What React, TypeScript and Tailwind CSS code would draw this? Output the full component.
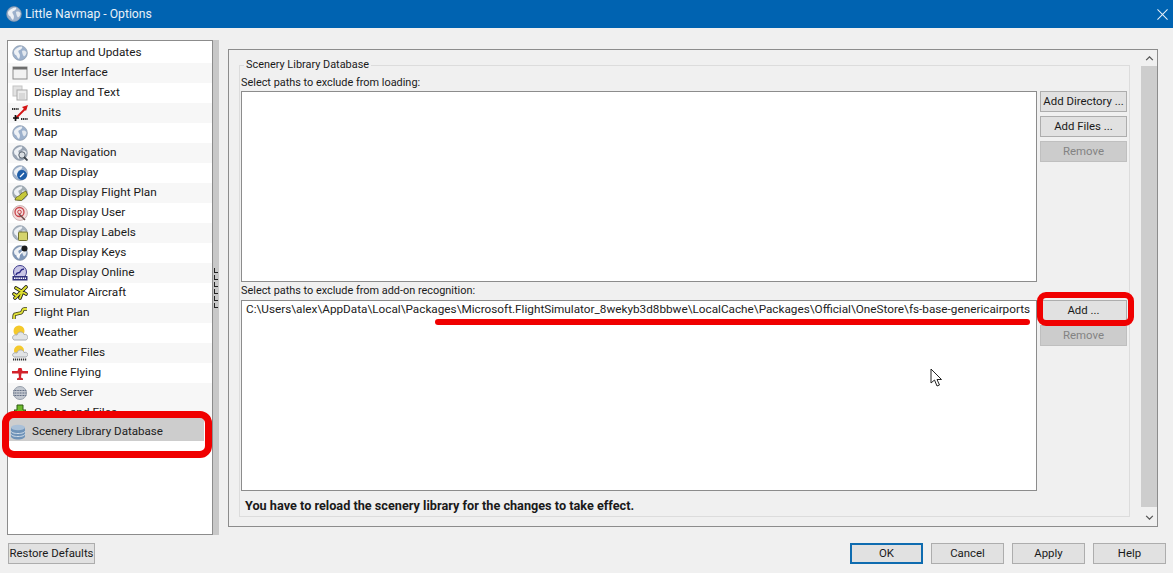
import { ReactNode } from "react";

const Globe = ({ c = "#9db1cc" }: { c?: string }) => (
  <>
    <circle cx="8" cy="8" r="7.400" fill={c} stroke="#8b98a8" strokeWidth="0.6" />
    <path d="M2 6c2-3 5-4.500 8-4.500 1 1.500-1 2.500-2 3.500-2 0-2 2-1 3 1.500 2 1 4 0 6-2-1-2-3-3-4-1.500 0-2-2-2-4z" fill="#eef1f5" />
    <path d="M10 6c2-1 3.500 0 4.500 1 0 2-1 3.500-2.500 4.500-1-1-2-3.500-2-5.500z" fill="#e3e8ee" />
  </>
);

const icons: Record<string, ReactNode> = {
  globe: <Globe />,
  window: (
    <>
      <rect x="1" y="2" width="14" height="12" fill="#f2f2f2" stroke="#8c8c8c" />
      <rect x="1" y="2" width="14" height="2.500" fill="#6d6d6d" />
    </>
  ),
  pages: (
    <>
      <rect x="1" y="1" width="9" height="10" fill="#e2e2e2" stroke="#c4c4c4" />
      <rect x="5" y="5" width="10" height="10" fill="#ececec" stroke="#a9a9a9" />
      <path d="M7 9h6M7 11h6M7 13h6" stroke="#c4c4c4" />
    </>
  ),
  units: (
    <>
      <path d="M3 14 14 3" stroke="#d41414" strokeWidth="1.800" />
      <path d="m16 0-6 2 4 4z" fill="#d41414" />
      <path d="M0 4h7" stroke="#333" strokeWidth="2" strokeDasharray="1.200 .6" />
      <path d="M1 13h6M3.500 10v6" stroke="#111" strokeWidth="1.700" />
      <path d="M9 14h7" stroke="#333" strokeWidth="2" strokeDasharray="1.200 .6" />
    </>
  ),
  nav: (
    <>
      <Globe c="#9aa5b4" />
      <circle cx="10" cy="10" r="3.200" fill="#d8dde2" stroke="#55606c" />
      <path d="m12 12 3.500 3.500" stroke="#3c444c" strokeWidth="1.800" />
    </>
  ),
  display: (
    <>
      <Globe />
      <circle cx="10" cy="10" r="5" fill="#1f5ea8" />
      <path d="m8 12 4-4" stroke="#fff" strokeWidth="1.200" />
    </>
  ),
  plan: (
    <>
      <Globe c="#a3adb3" />
      <path d="M3 15c1-4 3-3 5-5 1-2 4-3 6-4l1.500 4c-2 1-4 4-6 5.500z" fill="#c6c83a" stroke="#5a5a20" strokeWidth="0.8" />
    </>
  ),
  user: (
    <>
      <circle cx="8" cy="8" r="7.400" fill="#f4dcdc" stroke="#c9b0b0" />
      <circle cx="7.500" cy="7" r="4.500" fill="none" stroke="#c9444a" strokeWidth="1.300" />
      <circle cx="7.500" cy="7" r="1.800" fill="none" stroke="#c9444a" />
      <path d="m7 9 6 6" stroke="#6a4a4a" strokeWidth="1.400" />
    </>
  ),
  labels: (
    <>
      <Globe c="#a8b3bf" />
      <rect x="6.500" y="7" width="9" height="8.500" rx="1" fill="#d5d46c" stroke="#6f6f30" />
    </>
  ),
  keys: (
    <>
      <Globe c="#7f97b8" />
      <path d="m5 12 6-6" stroke="#fff" strokeWidth="1.300" />
      <circle cx="12.500" cy="3.500" r="3" fill="#1b1b1b" />
    </>
  ),
  online: (
    <>
      <circle cx="8" cy="7" r="6.500" fill="#c9c6e6" stroke="#3c3a8c" />
      <path d="M4 10c1-4 3-1 4-3s1-3 4-3" fill="none" stroke="#2c2a86" strokeWidth="1.500" />
      <rect x="0.500" y="11" width="15" height="4.500" fill="#30307c" />
      <path d="M2 13.200h12" stroke="#fff" strokeWidth="1.500" strokeDasharray="1.500 .7" />
    </>
  ),
  aircraft: (
    <>
      <path d="M14 2 3 13M4 3l10 6M8 13l2-5M2 9l3 2" stroke="#1c1c1c" strokeWidth="3.600" strokeLinecap="round" />
      <path d="M14 2 3 13M4 3l10 6M8 13l2-5M2 9l3 2" stroke="#dfe030" strokeWidth="2" strokeLinecap="round" />
    </>
  ),
  route: (
    <>
      <path d="M2 14c0-4 0-5 2-5l5-1c2-1 1-4 3-4h3" fill="none" stroke="#3a3a10" strokeWidth="3.400" />
      <path d="M2 14c0-4 0-5 2-5l5-1c2-1 1-4 3-4h3" fill="none" stroke="#e2e23a" strokeWidth="1.800" />
    </>
  ),
  weather: (
    <>
      <circle cx="7" cy="6" r="5.500" fill="#f4c92c" />
      <path d="M2 15c-3-2-1-6 3-5 1-4 6-4 7-.5 4-1 5 4 2 5.500z" fill="#e2e4e6" stroke="#a9adb2" />
    </>
  ),
  files: (
    <>
      <circle cx="7" cy="5.500" r="5" fill="#f4c92c" />
      <path d="M2 12c-3-2-1-5 3-4 1-4 6-4 7-.5 4-1 5 3 2 4.500z" fill="#e2e4e6" stroke="#a9adb2" />
      <path d="M1 14.500h14" stroke="#333" strokeWidth="1.800" strokeDasharray="1.200 .8" />
    </>
  ),
  flying: (
    <path d="M0 6h5.500l1-3h3l1 3H16v2.500H9.500l-.5 4 2 1v1.500H5v-1.500l2-1-.5-4H0z" fill="#d3222a" />
  ),
  server: (
    <>
      <circle cx="8" cy="8" r="6.500" fill="#c3c8d0" stroke="#98a0ac" />
      <path d="M1.500 5.500h13M1.500 8h13M1.500 10.500h13" stroke="#56627a" strokeWidth="1.200" strokeDasharray="1 .6" />
    </>
  ),
  cache: (
    <>
      <path d="M5 1h6v5h3l-6 6-6-6h3z" fill="#6dbb2c" stroke="#2f5a12" />
      <rect x="1" y="12" width="14" height="3" fill="#8a8a8a" />
    </>
  ),
  database: (
    <>
      <path d="M1 3.500v9C1 14 4 15.500 8 15.500s7-1.500 7-3v-9z" fill="#6f93b8" />
      <ellipse cx="8" cy="3.500" rx="7" ry="2.800" fill="#a9c0d8" />
      <path d="M1 7c0 1.500 3 2.500 7 2.500S15 8.500 15 7M1 10c0 1.500 3 2.500 7 2.500s7-1 7-2.500" fill="none" stroke="#d0dce8" />
    </>
  ),
};

const items: [string, string][] = [
  ["Startup and Updates", "globe"],
  ["User Interface", "window"],
  ["Display and Text", "pages"],
  ["Units", "units"],
  ["Map", "globe"],
  ["Map Navigation", "nav"],
  ["Map Display", "display"],
  ["Map Display Flight Plan", "plan"],
  ["Map Display User", "user"],
  ["Map Display Labels", "labels"],
  ["Map Display Keys", "keys"],
  ["Map Display Online", "online"],
  ["Simulator Aircraft", "aircraft"],
  ["Flight Plan", "route"],
  ["Weather", "weather"],
  ["Weather Files", "files"],
  ["Online Flying", "flying"],
  ["Web Server", "server"],
];

const Icon = ({ name }: { name: string }) => (
  <svg viewBox="0 0 16 16" className="h-4 w-4 shrink-0">
    {icons[name]}
  </svg>
);

const Btn = ({ children, disabled, className = "" }: { children: ReactNode; disabled?: boolean; className?: string }) => (
  <div
    className={`flex h-[21px] items-center justify-center whitespace-nowrap border pt-px text-[11.4px] ${
      disabled ? "border-[#bfbfbf] bg-[#cccccc] text-[#838383]" : "border-[#adadad] bg-[#e1e1e1] text-[#1a1a1a]"
    } ${className}`}
  >
    {children}
  </div>
);

const Section = ({ label, labelClass, children, buttons }: { label: string; labelClass: string; children?: ReactNode; buttons: ReactNode }) => (
  <>
    <div className={`flex items-center text-[10.9px] leading-none ${labelClass}`}>{label}</div>
    <div className="flex h-[191px] gap-[3px]">
      <div className="w-[796px] border border-[#8c8c8c] bg-white">{children}</div>
      <div className="flex w-[87px] flex-col gap-1">{buttons}</div>
    </div>
  </>
);

export default function App() {
  return (
    <div className="flex h-[573px] w-[1173px] flex-col overflow-hidden bg-[#f0f0f0] font-['Roboto',sans-serif] text-[11.8px] text-[#1a1a1a]">
      <header className="flex h-[28px] shrink-0 items-center bg-[#0063b1] pl-[6px] text-[12.2px] text-[#e8f0f8]">
        <Icon name="globe" />
        <span className="ml-[3px]">Little Navmap - Options</span>
        <svg viewBox="0 0 12 12" className="ml-auto mr-[5px] h-[11px] w-[11px]">
          <path d="m.5.500 11 11m0-11-11 11" stroke="#e8f0f8" strokeWidth="1.100" />
        </svg>
      </header>

      <div className="mt-[12px] flex h-[495px] shrink-0 pl-[7px]">
        <div className="relative w-[206px] overflow-hidden border border-[#8c8c8c] bg-white pt-[2px]">
          {items.map(([label, icon], i) => (
            <div key={label} className={`flex h-5 items-center gap-[6px] pl-1 ${i % 2 ? "bg-[#f7f7f7]" : ""}`}>
              <Icon name={icon} />
              <span>{label}</span>
            </div>
          ))}
          <div className="flex h-[15px] items-start gap-[6px] overflow-hidden bg-[#f7f7f7] pl-1 pt-[1px]">
            <Icon name="cache" />
            <span>Cache and Files</span>
          </div>
          <div className="flex h-[23px] w-[196px] items-center gap-[4px] bg-[#cdcdcd] pl-[2px] pt-[4px] text-[11.6px] text-[#222]">
            <Icon name="database" />
            <span className="ml-[2px]">Scenery Library Database</span>
          </div>
        </div>
        <div className="flex w-[6px] flex-col items-end justify-center gap-[2px] bg-[#c8c8c8] pr-[1px]">
          {Array.from({ length: 6 }).map((_, i) => (
            <div key={i} className="h-[5px] w-[4px] border-b border-l border-[#222]" />
          ))}
        </div>

        <div className="ml-[9px] mt-[9px] flex h-[478px] w-[930px] border border-[#8c8c8c]">
          <div className="w-[912px] pl-[10px] pt-[15px]">
            <div className="relative h-[452px] w-[891px] border border-[#dcdcdc] pl-px pt-[9px]">
              <span className="absolute -top-[6px] left-[4px] bg-[#f0f0f0] px-[2px] text-[10.9px] leading-none">Scenery Library Database</span>
              <Section
                label="Select paths to exclude from loading:"
                labelClass="h-[16px]"
                buttons={
                  <>
                    <Btn>Add Directory ...</Btn>
                    <Btn>Add Files ...</Btn>
                    <Btn disabled>Remove</Btn>
                  </>
                }
              />
              <Section
                label="Select paths to exclude from add-on recognition:"
                labelClass="h-[18px]"
                buttons={
                  <>
                    <Btn>Add ...</Btn>
                    <Btn disabled>Remove</Btn>
                  </>
                }
              >
                <div className="whitespace-nowrap pl-1 text-[11.75px] leading-[16px] text-[#222]">
                  C:\Users\alex\AppData\Local\Packages\Microsoft.FlightSimulator_8wekyb3d8bbwe\LocalCache\Packages\Official\OneStore\fs-base-genericairports
                </div>
              </Section>
              <div className="pl-1 pt-[7px] text-[12.7px] font-bold leading-[16px]">You have to reload the scenery library for the changes to take effect.</div>
            </div>
          </div>
          <div className="flex w-4 flex-col items-center">
            <svg viewBox="0 0 10 6" className="mt-[6px] h-[5px] w-[9px] shrink-0">
              <path d="m1 5 4-4 4 4" fill="none" stroke="#555" strokeWidth="1.500" />
            </svg>
            <div className="mt-[5px] h-[441px] w-full bg-[#cdcdcd]" />
            <svg viewBox="0 0 10 6" className="mt-[8px] h-[5px] w-[9px] shrink-0">
              <path d="m1 1 4 4 4-4" fill="none" stroke="#555" strokeWidth="1.500" />
            </svg>
          </div>
        </div>
      </div>

      <div className="mt-[8px] flex pl-[8px] pr-[7px]">
        <Btn className="w-[87px]">Restore Defaults</Btn>
        <div className="ml-auto flex gap-2">
          <Btn className="w-[73px] !border-2 !border-[#0f6cb0]">OK</Btn>
          <Btn className="w-[73px]">Cancel</Btn>
          <Btn className="w-[73px]">Apply</Btn>
          <Btn className="w-[73px]">Help</Btn>
        </div>
      </div>

      {/* red markup drawn over the screenshot */}
      <div className="absolute left-[2px] top-[411px] h-[47px] w-[210px] rounded-[12px] border-[7px] border-[#f00000]" />
      <div className="absolute left-[1037px] top-[292px] h-[34px] w-[97px] rounded-[9px] border-[6px] border-[#f00000]" />
      <div className="absolute left-[435px] top-[319px] h-[6px] w-[595px] rounded-full bg-[#f00000]" />
      <svg viewBox="0 0 13 19" className="absolute left-[930px] top-[368px] h-[19px] w-[13px]">
        <path d="M1 1v14l3.500-3 2.500 6 2.500-1-2.500-5.500h4.500z" fill="#fff" stroke="#222" />
      </svg>
    </div>
  );
}
